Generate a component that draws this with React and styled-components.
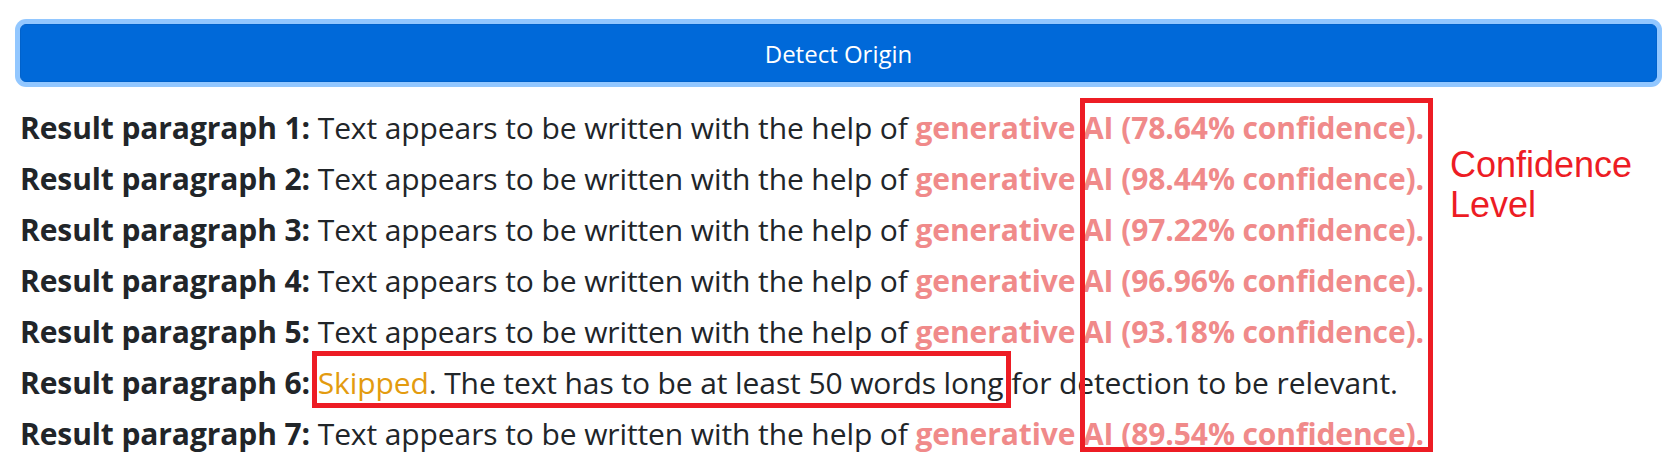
import React from "react";
import styled, { createGlobalStyle } from "styled-components";

const Global = createGlobalStyle`
  html, body { margin: 0; padding: 0; background: #ffffff; }
  body { font-family: "Open Sans", "Noto Sans", sans-serif; color: #212529; }
`;

const Page = styled.div`
  padding: 24px 15px 0 20px;
`;

const DetectButton = styled.button`
  display: block;
  width: 100%;
  height: 58px;
  margin: 0;
  padding: 0;
  border: 1px solid #0062cc;
  border-radius: 6px;
  background: #0069d9;
  color: #ffffff;
  font-family: "Open Sans", "Noto Sans", sans-serif;
  font-size: 24px;
  box-shadow: 0 0 0 5px rgba(38, 143, 255, 0.5);
  cursor: pointer;
  outline: none;
`;

const Results = styled.div`
  position: relative;
  margin-top: 20px;
`;

const Line = styled.p`
  margin: 0;
  font-size: 30px;
  line-height: 51px;
  white-space: nowrap;
  letter-spacing: -0.1px;
`;

const Label = styled.b`
  font-weight: 700;
  color: #212529;
`;

const Ai = styled.b`
  font-weight: 700;
  color: #f08a8a;
`;

const Skipped = styled.span`
  color: #e39b0f;
`;

const SkipBox = styled.span`
  border: 5px solid #ed1c24;
  padding: 6px 2px 0 1px;
  margin: 0 -7px 0 -6px;
`;

const ConfidenceBox = styled.div`
  position: absolute;
  left: 1060px;
  top: -4px;
  width: 343px;
  height: 344px;
  border: 5px solid #ed1c24;
  pointer-events: none;
`;

const Annotation = styled.div`
  position: absolute;
  left: 1430px;
  top: 43px;
  font-family: "Liberation Sans", Arial, sans-serif;
  font-size: 36px;
  line-height: 40px;
  color: #ed1c24;
`;

const results = [
  { n: 1, conf: "78.64" },
  { n: 2, conf: "98.44" },
  { n: 3, conf: "97.22" },
  { n: 4, conf: "96.96" },
  { n: 5, conf: "93.18" },
  { n: 6, skipped: true },
  { n: 7, conf: "89.54" },
];

export default function App() {
  return (
    <>
      <Global />
      <Page>
        <DetectButton>Detect Origin</DetectButton>
        <Results>
          {results.map((r) => (
            <Line key={r.n}>
              <Label>Result paragraph {r.n}:</Label>{" "}
              {r.skipped ? (
                <>
                  <SkipBox>
                    <Skipped>Skipped</Skipped>. The text has to be at least 50 words long
                  </SkipBox>{" "}
                  for detection to be relevant.
                </>
              ) : (
                <>
                  Text appears to be written with the help of{" "}
                  <Ai>generative AI ({r.conf}% confidence).</Ai>
                </>
              )}
            </Line>
          ))}
          <ConfidenceBox />
          <Annotation>
            Confidence
            <br />
            Level
          </Annotation>
        </Results>
      </Page>
    </>
  );
}
